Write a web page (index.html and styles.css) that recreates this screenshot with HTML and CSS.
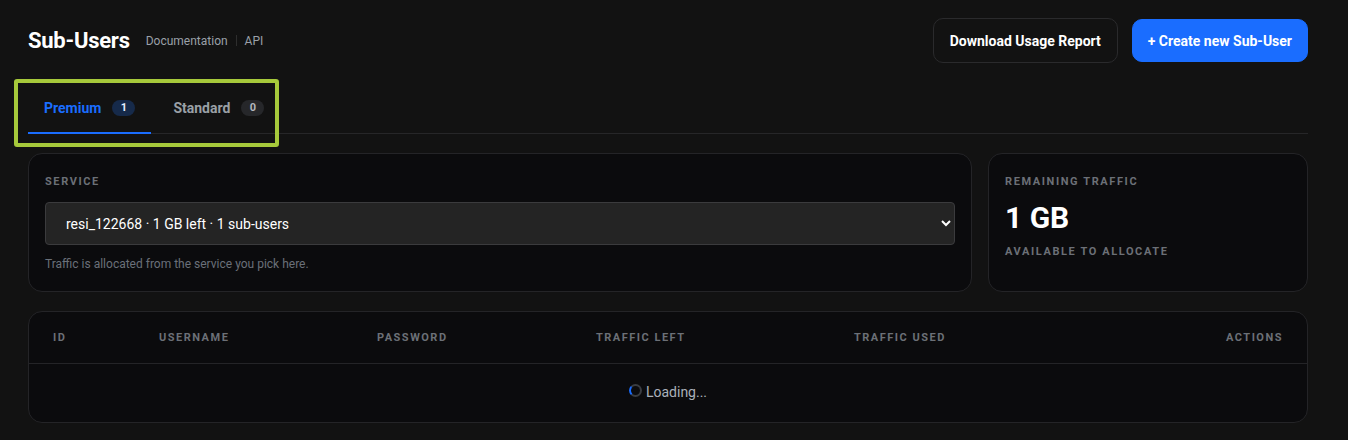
FILE: index.html
```html
<!DOCTYPE html>
<html lang="en">
<head>
<meta charset="utf-8">
<title>Sub-Users</title>
<link rel="stylesheet" href="styles.css">
</head>
<body>
<div class="page">
  <header class="header">
    <div class="title-group">
      <h1 class="title">Sub-Users</h1>
      <nav class="links">
        <a class="link" href="#">Documentation</a>
        <span class="sep"></span>
        <a class="link" href="#">API</a>
      </nav>
    </div>
    <div class="actions">
      <button class="btn btn-outline">Download Usage Report</button>
      <button class="btn btn-primary">+ Create new Sub-User</button>
    </div>
  </header>

  <div class="tabs">
    <div class="tab active">Premium <span class="badge badge-blue">1</span></div>
    <div class="tab">Standard <span class="badge badge-grey">0</span></div>
  </div>

  <div class="cards">
    <section class="card service-card">
      <div class="label">Service</div>
      <select class="select">
        <option>resi_122668 · 1 GB left · 1 sub-users</option>
      </select>
      <div class="help">Traffic is allocated from the service you pick here.</div>
    </section>
    <section class="card traffic-card">
      <div class="label">Remaining Traffic</div>
      <div class="big">1 GB</div>
      <div class="label">Available to allocate</div>
    </section>
  </div>

  <section class="card table-card">
    <div class="thead">
      <div class="th">ID</div>
      <div class="th">Username</div>
      <div class="th">Password</div>
      <div class="th">Traffic Left</div>
      <div class="th">Traffic Used</div>
      <div class="th th-right">Actions</div>
    </div>
    <div class="loading-row">
      <span class="spinner"></span>
      <span class="loading-text">Loading...</span>
    </div>
  </section>

  <div class="highlight"></div>
</div>
</body>
</html>
```

FILE: styles.css
```css
* { box-sizing: border-box; }

html, body {
  margin: 0;
  background: #121212;
  color: #ffffff;
  font-family: Roboto, "Liberation Sans", sans-serif;
}

.page {
  position: relative;
  padding: 18px 40px 0 28px;
}

.header {
  display: flex;
  align-items: center;
  justify-content: space-between;
  height: 45px;
}

.title-group {
  display: flex;
  align-items: center;
  gap: 16px;
}

.title {
  margin: 0;
  font-size: 22px;
  font-weight: 700;
  letter-spacing: -0.25px;
  color: #ffffff;
}

.links {
  display: flex;
  align-items: center;
  gap: 8px;
  margin-top: 0;
}

.link {
  font-size: 12px;
  color: #9aa0a8;
  text-decoration: none;
}

.sep {
  width: 1px;
  height: 11px;
  background: #2e2e2e;
}

.actions {
  display: flex;
  gap: 14px;
  align-items: center;
}

.btn {
  font-family: Roboto, "Liberation Sans", sans-serif;
  font-size: 14px;
  font-weight: 700;
  color: #ffffff;
  border-radius: 10px;
  cursor: pointer;
}

.btn-outline {
  height: 45px;
  padding: 0 16px;
  background: #121212;
  border: 1px solid #2a2a2c;
}

.btn-primary {
  height: 43px;
  padding: 0 15px;
  background: #1a6dff;
  border: 1px solid #1a6dff;
}

.tabs {
  display: flex;
  gap: 6px;
  margin-top: 17px;
  border-bottom: 1px solid #262628;
}

.tab {
  display: flex;
  align-items: center;
  padding: 18px 16px 14px;
  line-height: 20px;
  font-size: 14px;
  font-weight: 700;
  color: #9aa0a6;
  border-bottom: 2px solid transparent;
  margin-bottom: -1px;
}

.tab.active {
  color: #1a6dff;
  border-bottom-color: #1a6dff;
}

.badge {
  display: inline-flex;
  align-items: center;
  justify-content: center;
  margin-left: 11px;
  min-width: 23px;
  height: 16px;
  padding: 0 7px;
  border-radius: 8px;
  font-size: 11px;
  font-weight: 700;
}

.badge-blue {
  background: #162a4a;
  color: #e6eeff;
}

.badge-grey {
  background: #26272a;
  color: #b4b8be;
}

.cards {
  display: grid;
  grid-template-columns: 1fr 320px;
  gap: 16px;
  margin-top: 19px;
}

.card {
  background: #0b0b0d;
  border: 1px solid #242427;
  border-radius: 14px;
}

.service-card,
.traffic-card {
  height: 139px;
  padding: 20px 16px 0;
}

.label {
  font-size: 11px;
  line-height: 16px;
  font-weight: 700;
  letter-spacing: 1.6px;
  text-transform: uppercase;
  color: #6c7077;
}

.select {
  display: block;
  width: 100%;
  height: 43px;
  margin-top: 12px;
  padding: 0 16px;
  background: #242424;
  border: 1px solid #3b3b3d;
  border-radius: 4px;
  color: #ffffff;
  font-family: Roboto, "Liberation Sans", sans-serif;
  font-size: 14px;
  color-scheme: dark;
}

.help {
  margin-top: 10px;
  font-size: 12px;
  line-height: 18px;
  color: #6a7079;
}

.big {
  margin-top: 11px;
  margin-bottom: 9px;
  font-size: 30px;
  line-height: 34px;
  font-weight: 700;
  color: #ffffff;
}

.table-card {
  margin-top: 19px;
}

.thead {
  display: grid;
  grid-template-columns: 106px 218px 219px 258px 1fr auto;
  align-items: center;
  height: 52px;
  padding: 0 24px;
  border-bottom: 1px solid #242427;
}

.th {
  font-size: 11px;
  font-weight: 700;
  letter-spacing: 1.5px;
  text-transform: uppercase;
  color: #6c7077;
}

.th-right {
  text-align: right;
}

.loading-row {
  display: flex;
  align-items: center;
  justify-content: center;
  gap: 4px;
  height: 58px;
  padding-bottom: 2px;
  font-size: 14px;
  color: #aab1ba;
}

.spinner {
  width: 13px;
  height: 13px;
  border: 2px solid #3a3d42;
  border-left-color: #1a6dff;
  border-radius: 50%;
  margin-top: -4px;
}

.highlight {
  position: absolute;
  left: 14px;
  top: 79px;
  width: 265px;
  height: 68px;
  border: 4px solid #a6c93b;
  border-radius: 3px;
  pointer-events: none;
}
```
